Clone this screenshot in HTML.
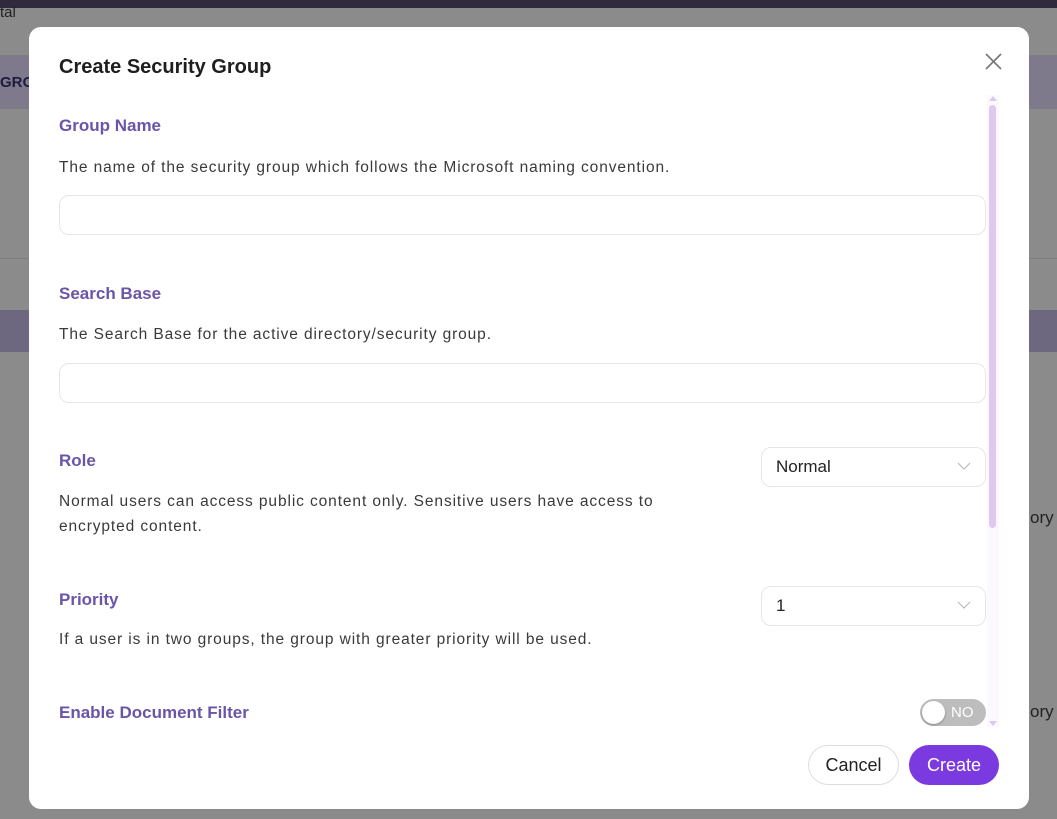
<!DOCTYPE html>
<html><head><style>
*{box-sizing:border-box;margin:0;padding:0}
body{width:1057px;height:819px;overflow:hidden;background:#8b8b8b;font-family:"Liberation Sans",sans-serif;position:relative}
.abs{position:absolute}
.modal{left:29px;top:27px;width:1000px;height:782px;background:#fff;border-radius:12px}
h1{position:absolute;left:30px;top:29px;font-size:20px;font-weight:bold;color:#1e1e1e}
.lbl{position:absolute;left:30px;font-size:17px;font-weight:bold;color:#6a55a8}
.desc{position:absolute;left:30px;font-size:15.5px;letter-spacing:0.9px;color:#3a3a3a;line-height:25px}
.inp{position:absolute;left:30px;width:927px;height:40px;border:1px solid #e6e6ea;border-radius:10px}
.sel{position:absolute;left:732px;width:225px;height:40px;border:1px solid #e6e6ea;border-radius:10px;font-size:17px;color:#222;padding:9px 0 0 14px}
.sel svg{position:absolute;right:14px;top:14px}
</style></head><body>
<div class="abs" style="left:0;top:0;width:1057px;height:8px;background:#2f2a3e"></div>
<div class="abs" style="left:0;top:4px;font-size:15px;color:#222">tal</div>
<div class="abs" style="left:0;top:55px;width:1057px;height:54px;background:#7f7a8b"></div>
<div class="abs" style="left:0;top:74px;font-size:15px;font-weight:bold;color:#1e1a40">GRO</div>
<div class="abs" style="left:0;top:258px;width:1057px;height:1px;background:#7d7d7d"></div>
<div class="abs" style="left:0;top:310px;width:1057px;height:42px;background:#6d6880"></div>
<div class="abs" style="left:1030px;top:508px;font-size:17px;color:#222">ory</div>
<div class="abs" style="left:1030px;top:702px;font-size:17px;color:#222">ory</div>
<div class="abs modal">
<h1>Create Security Group</h1>
<svg class="abs" style="left:956px;top:26px" width="17" height="17" viewBox="0 0 17 17"><path d="M1 1L16 16M16 1L1 16" stroke="#777" stroke-width="1.6"/></svg>
<div class="abs" style="left:958px;top:68px;width:12px;height:632px;background:#fbf9fd"></div>
<svg class="abs" style="left:960px;top:68px" width="8" height="6"><path d="M0 6L4 1L8 6Z" fill="#dcc8ee"/></svg>
<div class="abs" style="left:960px;top:78px;width:7px;height:423px;background:#dfc9ee;border-radius:4px"></div>
<svg class="abs" style="left:960px;top:694px" width="8" height="6"><path d="M0 0L4 5L8 0Z" fill="#dcc8ee"/></svg>
<div class="lbl" style="top:89px">Group Name</div>
<div class="desc" style="top:128px">The name of the security group which follows the Microsoft naming convention.</div>
<div class="inp" style="top:168px"></div>
<div class="lbl" style="top:257px">Search Base</div>
<div class="desc" style="top:295px">The Search Base for the active directory/security group.</div>
<div class="inp" style="top:336px"></div>
<div class="lbl" style="top:424px">Role</div>
<div class="desc" style="top:462px;width:630px">Normal users can access public content only. Sensitive users have access to encrypted content.</div>
<div class="sel" style="top:420px">Normal<svg width="14" height="9"><path d="M1 1L7 7L13 1" stroke="#bbb" fill="none" stroke-width="1.2"/></svg></div>
<div class="lbl" style="top:563px">Priority</div>
<div class="desc" style="top:600px">If a user is in two groups, the group with greater priority will be used.</div>
<div class="sel" style="top:559px">1<svg width="14" height="9"><path d="M1 1L7 7L13 1" stroke="#bbb" fill="none" stroke-width="1.2"/></svg></div>
<div class="lbl" style="top:676px">Enable Document Filter</div>
<div class="abs" style="left:891px;top:672px;width:66px;height:27px;border-radius:14px;background:#bdbdbd"></div>
<div class="abs" style="left:893px;top:674px;width:23px;height:23px;border-radius:50%;background:#fff;box-shadow:0 1px 2px rgba(0,0,0,.3)"></div>
<div class="abs" style="left:922px;top:677px;font-size:15px;color:#fff">NO</div>
<div class="abs" style="left:779px;top:718px;width:91px;height:40px;border:1px solid #ddd;border-radius:20px;font-size:18px;color:#222;text-align:center;line-height:38px">Cancel</div>
<div class="abs" style="left:880px;top:718px;width:90px;height:40px;background:#7a3ae0;border-radius:20px;font-size:18px;color:#fff;text-align:center;line-height:40px">Create</div>
</div>
</body></html>
